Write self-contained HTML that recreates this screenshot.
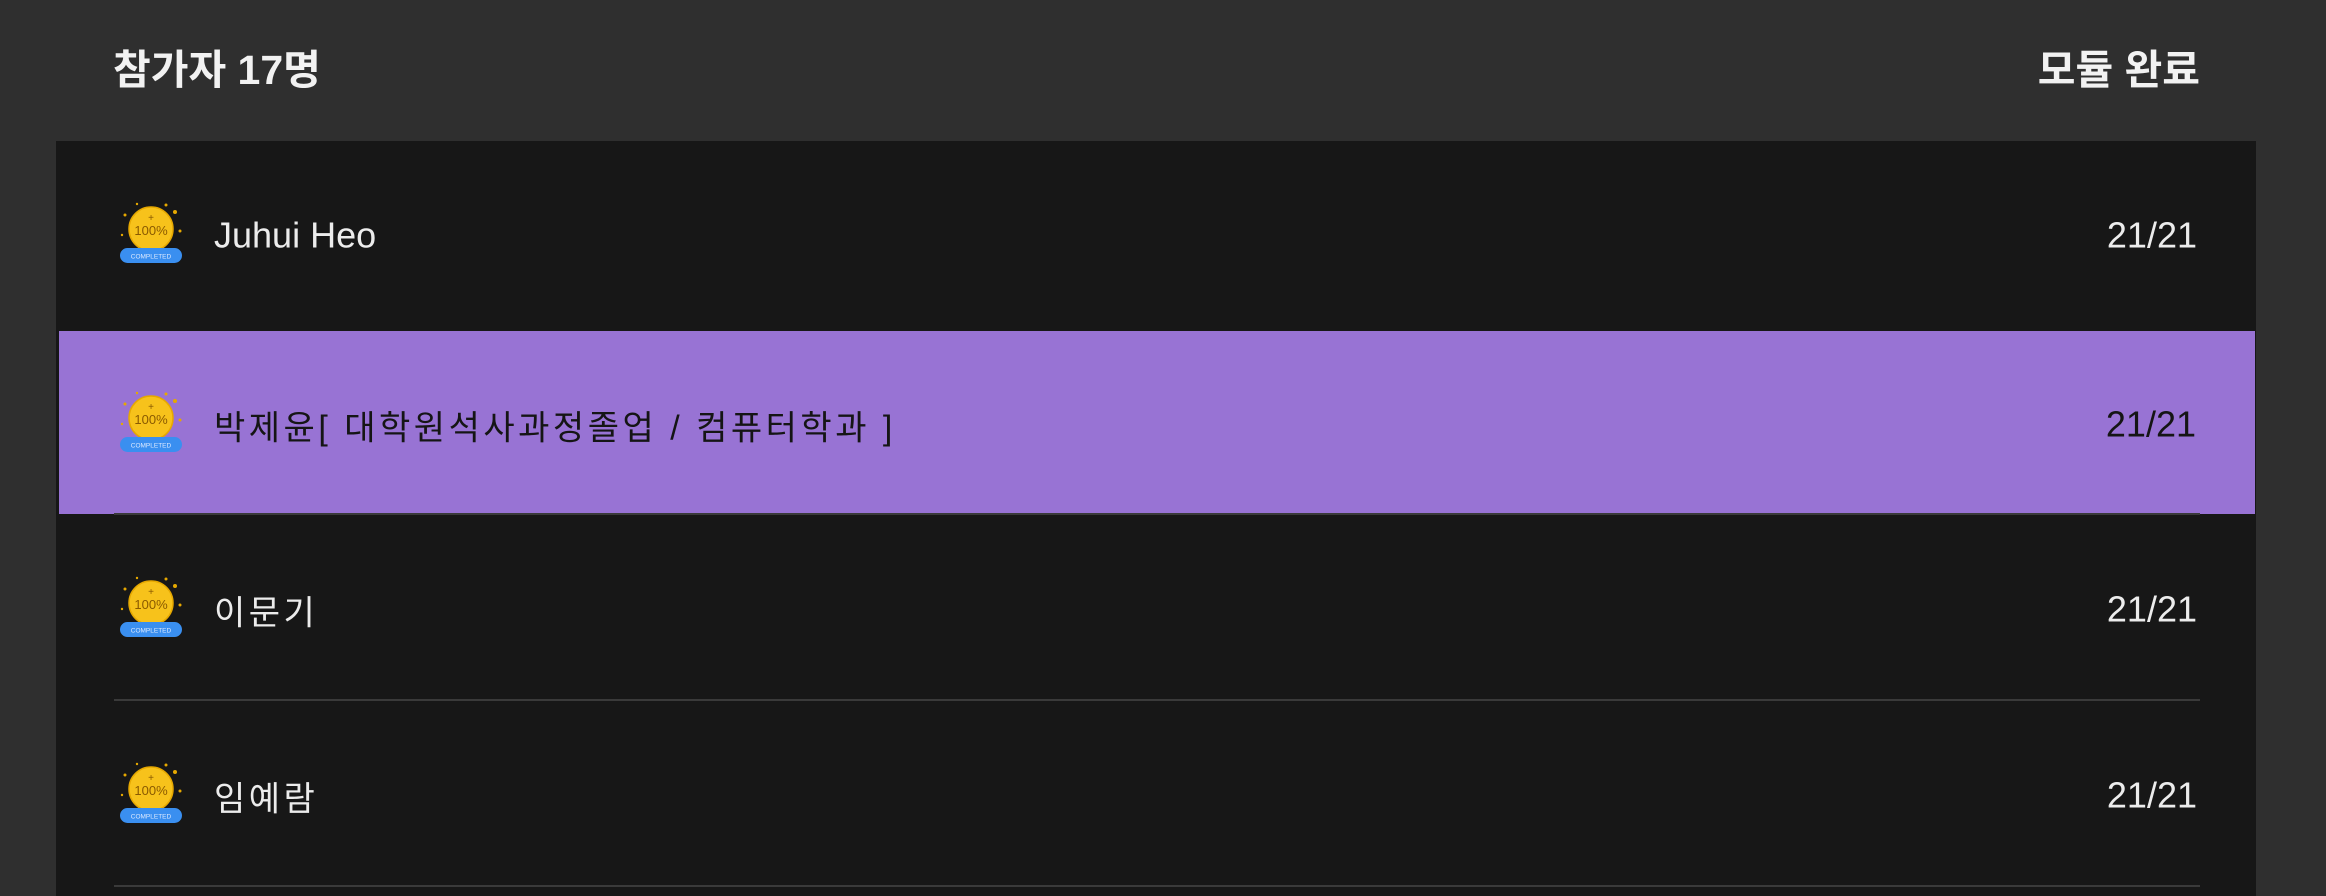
<!DOCTYPE html>
<html><head><meta charset="utf-8"><style>
html,body{margin:0;padding:0;width:2326px;height:896px;overflow:hidden;}
body{background:#2f2f2f;position:relative;font-family:"Liberation Sans","Noto Sans CJK KR",sans-serif;}
.h{position:absolute;top:44px;font-size:41px;font-weight:bold;color:#f2f2f2;line-height:52px;}
.panel{position:absolute;left:56px;top:141px;width:2200px;height:755px;background:#171717;overflow:hidden;}
.row{position:absolute;left:0;width:2200px;height:186px;}
.row .ic{position:absolute;left:61px;top:50%;margin-top:-33px;}
.row .n{position:absolute;left:158px;top:50%;transform:translateY(-46%);font-size:36px;color:#ececec;white-space:nowrap;}
.row .n.k{font-size:34px;letter-spacing:3.5px;}
.row .v{position:absolute;right:59px;top:50%;transform:translateY(-46%);font-size:36px;color:#ececec;}
.sel{background:#9873d4;left:3px;width:2196px;}
.sel .n{left:155px;}
.sel .n,.sel .v{color:#151515;}
.sel .ic{left:58px;}
.div{position:absolute;left:58px;width:2086px;height:2px;background:#3a3a3a;}
</style></head><body>
<div class="h" style="left:113px">참가자 17명</div>
<div class="h" style="right:126px">모듈 완료</div>
<div class="panel">
<svg width="0" height="0" style="position:absolute"><defs>
<g id="badge">
<circle cx="34" cy="28" r="22" fill="#f7c21b"/>
<circle cx="34" cy="28" r="22" fill="none" stroke="#e6a800" stroke-width="1.5"/>
<text x="34" y="34" font-size="13" text-anchor="middle" fill="#8a5a00" font-family="Liberation Sans">100%</text>
<text x="34" y="20" font-size="10" text-anchor="middle" fill="#8a5a00" font-family="Liberation Sans">+</text>
<circle cx="8" cy="14" r="1.5" fill="#e6a800"/><circle cx="58" cy="11" r="2" fill="#e6a800"/><circle cx="63" cy="30" r="1.5" fill="#e6a800"/><circle cx="5" cy="34" r="1.2" fill="#e6a800"/><circle cx="20" cy="3" r="1.2" fill="#e6a800"/><circle cx="49" cy="4" r="1.5" fill="#e6a800"/>
<rect x="3" y="47" width="62" height="15" rx="7.5" fill="#3a8ff0"/>
<text x="34" y="57.5" font-size="6.5" text-anchor="middle" fill="#dbe9ff" font-family="Liberation Sans">COMPLETED</text>
</g></defs></svg>
<div class="row" style="top:0"><svg class="ic" width="68" height="66"><use href="#badge"/></svg><div class="n">Juhui Heo</div><div class="v">21/21</div></div>
<div class="row sel" style="top:190px;height:183px"><svg class="ic" width="68" height="66"><use href="#badge"/></svg><div class="n k">박제윤[ 대학원석사과정졸업 / 컴퓨터학과 ]</div><div class="v">21/21</div></div>
<div class="div" style="top:372px"></div>
<div class="row" style="top:374px"><svg class="ic" width="68" height="66"><use href="#badge"/></svg><div class="n k">이문기</div><div class="v">21/21</div></div>
<div class="div" style="top:558px"></div>
<div class="row" style="top:560px"><svg class="ic" width="68" height="66"><use href="#badge"/></svg><div class="n k">임예람</div><div class="v">21/21</div></div>
<div class="div" style="top:744px"></div>
</div>
</body></html>
